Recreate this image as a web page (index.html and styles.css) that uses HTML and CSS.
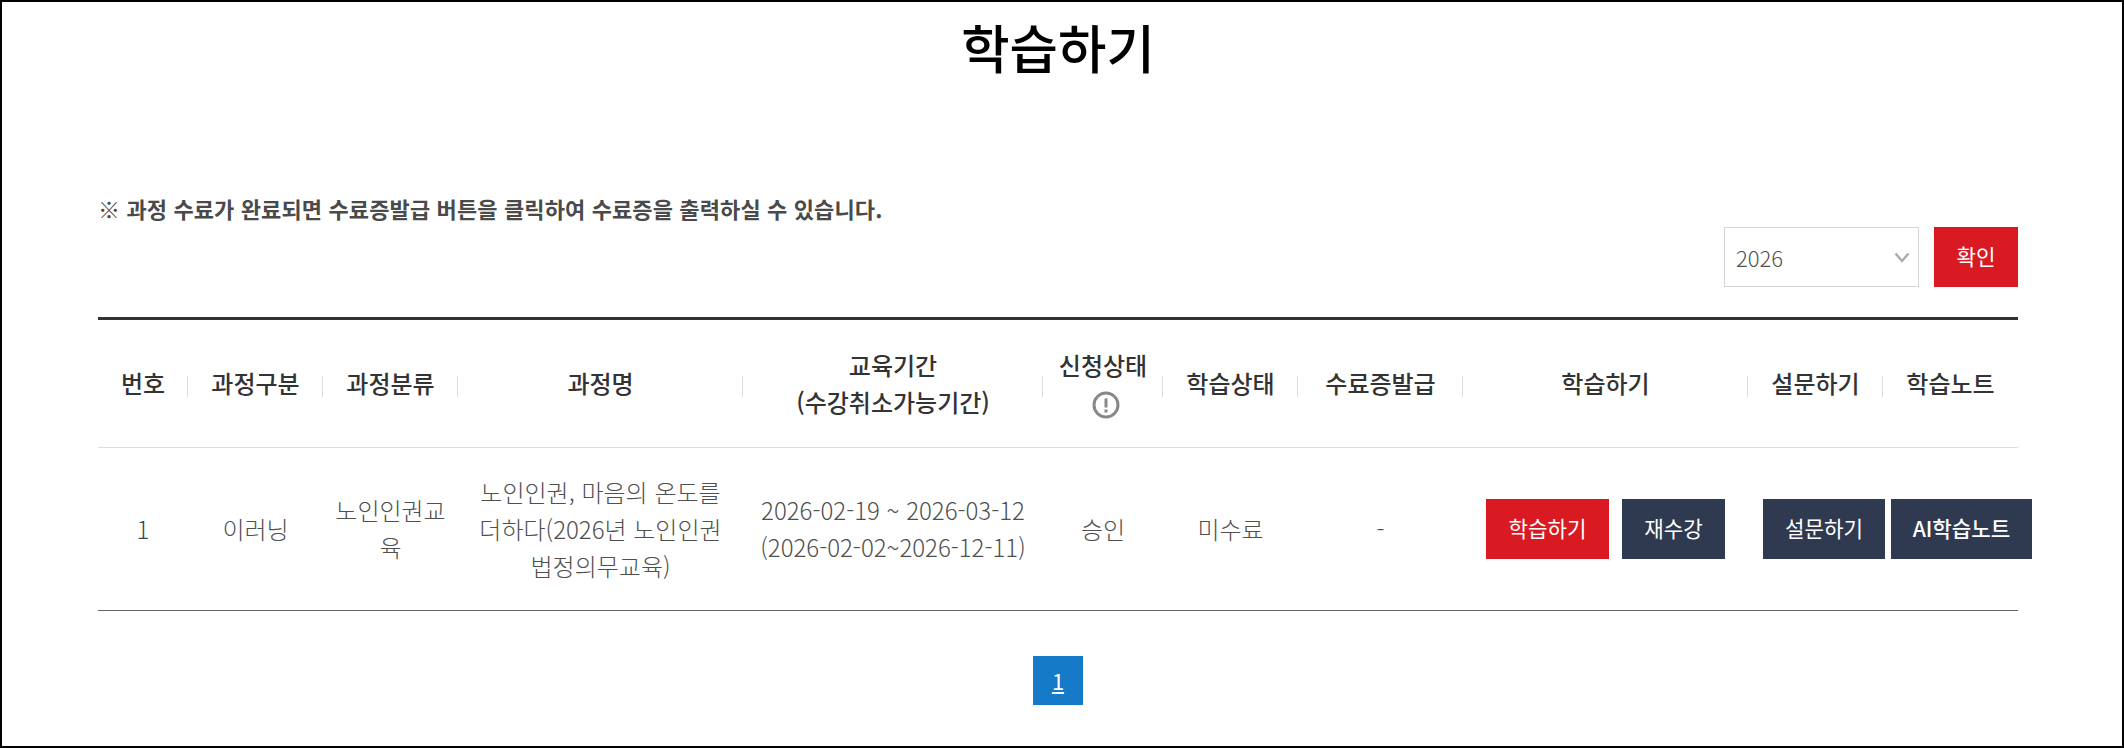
FILE: index.html
```html
<!DOCTYPE html>
<html lang="ko">
<head>
<meta charset="utf-8">
<title>학습하기</title>
<link rel="stylesheet" href="styles.css">
</head>
<body>
<div class="frame">
  <main class="content">
    <h1 class="title">학습하기</h1>
    <p class="notice">※ 과정 수료가 완료되면 수료증발급 버튼을 클릭하여 수료증을 출력하실 수 있습니다.</p>
    <form class="filter">
      <div class="select-wrap">
        <select class="select"><option>2026</option></select>
        <svg class="chevron" width="16" height="11" viewBox="0 0 16 11"><path d="M1.5 1.5 L8 9 L14.5 1.5" fill="none" stroke="#aaa" stroke-width="2.4"/></svg>
      </div>
      <button type="button" class="btn btn-red btn-ok">확인</button>
    </form>
    <table class="grid">
      <colgroup>
        <col class="c90"><col class="c135"><col class="c135"><col class="c285"><col class="c300"><col class="c120"><col class="c135"><col class="c165"><col class="c285"><col class="c135"><col class="c135">
      </colgroup>
      <thead>
        <tr>
          <th>번호</th>
          <th>과정구분</th>
          <th>과정분류</th>
          <th>과정명</th>
          <th>교육기간<br>(수강취소가능기간)</th>
          <th>신청상태<br><svg class="info" width="28" height="28" viewBox="0 0 28 28"><circle cx="14" cy="14" r="12" fill="none" stroke="#888" stroke-width="3"/><path d="M14 7.5 V16.5" stroke="#888" stroke-width="3"/><path d="M14 18.5 V21.5" stroke="#888" stroke-width="3"/></svg></th>
          <th>학습상태</th>
          <th>수료증발급</th>
          <th>학습하기</th>
          <th>설문하기</th>
          <th>학습노트</th>
        </tr>
      </thead>
      <tbody>
        <tr>
          <td class="num">1</td>
          <td>이러닝</td>
          <td>노인인권교육</td>
          <td>노인인권, 마음의 온도를 더하다(2026년 노인인권 법정의무교육)</td>
          <td class="dates">2026-02-19 ~ 2026-03-12<br>(2026-02-02~2026-12-11)</td>
          <td>승인</td>
          <td>미수료</td>
          <td>-</td>
          <td class="cell-actions"><div class="actions"><a class="btn btn-red btn-study">학습하기</a><a class="btn btn-navy btn-retake">재수강</a></div></td>
          <td class="cell-survey"><a class="btn btn-navy btn-survey">설문하기</a></td>
          <td class="cell-note"><a class="btn btn-navy btn-note">AI학습노트</a></td>
        </tr>
      </tbody>
    </table>
    <nav class="pager"><a class="page">1</a></nav>
  </main>
</div>
</body>
</html>
```
FILE: styles.css
```css
* { box-sizing: border-box; }
html, body { margin: 0; padding: 0; }
body {
  width: 2124px;
  height: 748px;
  overflow: hidden;
  background: #fff;
  font-family: "Noto Sans CJK KR", "Noto Sans", sans-serif;
  color: #555;
}
.frame {
  width: 2124px;
  height: 748px;
  border: 2px solid #000;
}
.content {
  width: 1920px;
  margin-left: 96px;
}
.title {
  margin: 0;
  height: 90px;
  padding-top: 9px;
  font-size: 52.6px;
  line-height: 70px;
  font-weight: 500;
  color: #000;
  text-align: center;
}
.notice {
  margin: 98px 0 0;
  height: 37px;
  font-size: 22px;
  line-height: 36px;
  letter-spacing: 0.12px;
  font-weight: 700;
  color: #4a4a4a;
}
.filter {
  display: flex;
  justify-content: flex-end;
  gap: 15px;
}
.select-wrap {
  position: relative;
  width: 195px;
  height: 60px;
}
.select {
  appearance: none;
  width: 100%;
  height: 100%;
  padding: 0 0 0 11px;
  border: 1px solid #d5d5d5;
  border-radius: 0;
  background: #fff;
  font: 300 22px "Noto Sans CJK KR", sans-serif;
  color: #4f4f4f;
}
.chevron {
  position: absolute;
  right: 9px;
  top: 25px;
}
.btn {
  display: flex;
  align-items: center;
  justify-content: center;
  height: 60px;
  padding: 0 0 3px;
  border: 0;
  color: #fff;
  font: 400 21.2px "Noto Sans CJK KR", sans-serif;
  white-space: nowrap;
  flex: none;
}
.btn-red { background: #d91a22; }
.btn-navy { background: #2f3a51; }
.btn-ok { width: 84px; }
.btn-study { width: 123px; }
.btn-retake { width: 103px; }
.btn-survey { width: 122px; }
.btn-note { width: 141px; font-weight: 500; }
.grid {
  width: 1920px;
  margin-top: 30px;
  table-layout: fixed;
  border-collapse: collapse;
  border-top: 3px solid #333;
  border-bottom: 1px solid #666;
}
.c90 { width: 90px; }
.c120 { width: 120px; }
.c135 { width: 135px; }
.c165 { width: 165px; }
.c285 { width: 285px; }
.c300 { width: 300px; }
.grid th {
  position: relative;
  height: 129px;
  padding: 0 0 2px;
  border-bottom: 1px solid #ddd;
  font-size: 24px;
  line-height: 37px;
  font-weight: 500;
  color: #333;
  text-align: center;
}
.grid th + th::before {
  content: "";
  position: absolute;
  left: -1px;
  top: 56px;
  width: 1px;
  height: 21px;
  background: #ddd;
}
.grid td {
  height: 163px;
  padding: 0 10px 2px;
  font-size: 24px;
  line-height: 37px;
  font-weight: 300;
  color: #4f4f4f;
  text-align: center;
  vertical-align: middle;
}
.grid td.num { color: #345; }
.grid td.dates { padding: 0 0 2px; white-space: nowrap; }
.grid td.cell-actions { padding: 0; }
.grid td.cell-survey { padding: 0 0 0 15px; }
.grid td.cell-note { padding: 0 0 0 8px; }
.info {
  display: inline-block;
  vertical-align: middle;
  margin-left: 6px;
}
.actions {
  display: flex;
  justify-content: center;
  gap: 13px;
}
.pager {
  display: flex;
  justify-content: center;
  margin-top: 45px;
}
.page {
  width: 50px;
  height: 49px;
  background: #157ac8;
  color: #fff;
  font-size: 22px;
  line-height: 49px;
  text-align: center;
  text-decoration: underline;
}
```
